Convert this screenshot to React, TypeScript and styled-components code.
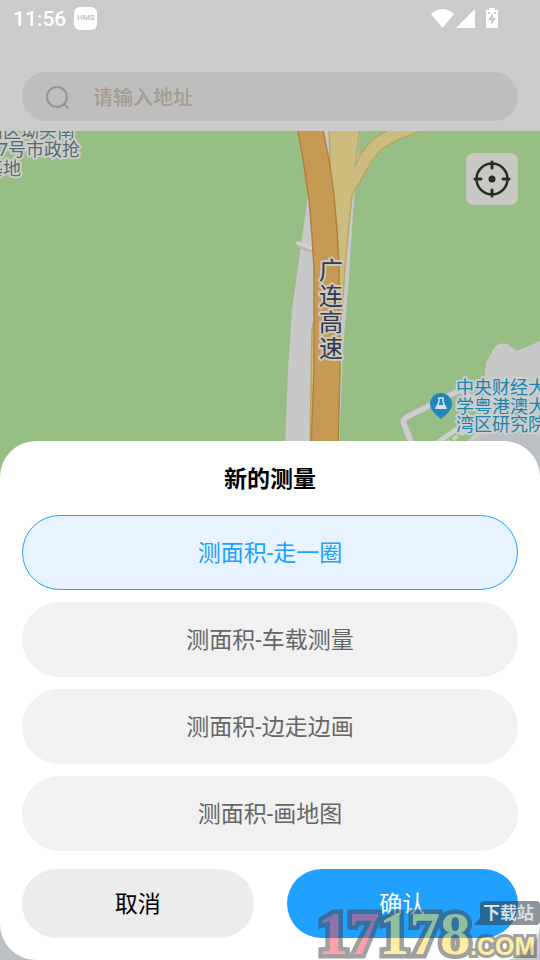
import React, { useState } from "react";
import styled, { createGlobalStyle } from "styled-components";

const sans = `"Roboto", "Noto Sans CJK SC", sans-serif`;

const GlobalStyle = createGlobalStyle`
  * { box-sizing: border-box; }
  body { margin: 0; background: #cbcbcb; font-family: ${sans}; }
  button, input { font-family: inherit; }
`;

const Page = styled.div`
  position: relative;
  display: flex;
  flex-direction: column;
  min-height: 100vh;
  overflow: hidden;
`;

const StatusBar = styled.header`
  display: flex;
  align-items: center;
  justify-content: space-between;
  height: 36px;
  padding: 0 40px 0 13px;
  color: #fff;
`;

const StatusGroup = styled.div`
  display: flex;
  align-items: center;
  gap: 8px;
`;

const Clock = styled.time`
  padding-top: 2px;
  font-size: 21px;
  line-height: 24px;
  font-weight: 500;
`;

const AppBadge = styled.span`
  display: grid;
  place-items: center;
  width: 23px;
  height: 23px;
  border-radius: 6px;
  background: #fff;
  color: #aaa;
  font-size: 8px;
  line-height: 8px;
`;

const SearchArea = styled.div`
  padding: 36px 22px 10px;
`;

const SearchBar = styled.label`
  display: flex;
  align-items: center;
  gap: 22px;
  height: 49px;
  padding: 0 23px;
  border-radius: 25px;
  background: #bebebe;
`;

const SearchInput = styled.input`
  flex: 1;
  min-width: 0;
  padding: 2px 0 0;
  border: 0;
  outline: 0;
  background: transparent;
  font-size: 20px;
  line-height: 28px;
  font-weight: 500;
  color: #555;
  &::placeholder { color: #a59d90; opacity: 1; }
`;

const MapArea = styled.main`
  position: relative;
  display: flex;
  flex: 1;
  background: #97be84;
`;

const MapDrawing = styled.svg`
  position: absolute;
  inset: 0;
  width: 100%;
  height: 100%;
`;

const LocateButton = styled.button`
  position: absolute;
  top: 22px;
  right: 22px;
  display: grid;
  place-items: center;
  width: 52px;
  height: 52px;
  padding: 0;
  border: 0;
  border-radius: 8px;
  background: #c7c9c5;
`;

const Sheet = styled.section`
  position: absolute;
  left: 0;
  right: 0;
  bottom: 0;
  display: flex;
  flex-direction: column;
  gap: 18px;
  padding: 20px 22px 22px;
  border-radius: 36px;
  background: #fff;
`;

const SheetTitle = styled.h2`
  margin: 0;
  padding-top: 2px;
  font-size: 23px;
  line-height: 34px;
  font-weight: 700;
  text-align: center;
  color: #000;
`;

const Options = styled.div`
  display: flex;
  flex-direction: column;
  gap: 12px;
`;

const Option = styled.button<{ $selected: boolean }>`
  height: 75px;
  padding: 2px 0 0;
  border: 1px solid ${(p) => (p.$selected ? "#20a0ff" : "#f1f1f1")};
  border-radius: 38px;
  background: ${(p) => (p.$selected ? "#e7f3fe" : "#f1f1f1")};
  color: ${(p) => (p.$selected ? "#20a0ff" : "#666")};
  font-size: 23px;
  line-height: 36px;
`;

const Actions = styled.div`
  display: grid;
  grid-template-columns: 1fr 1fr;
  gap: 33px;
`;

const ActionButton = styled.button<{ $primary?: boolean }>`
  height: 69px;
  padding: 2px 0 0;
  border: 0;
  border-radius: 35px;
  background: ${(p) => (p.$primary ? "#20a0ff" : "#ececec")};
  color: ${(p) => (p.$primary ? "#fff" : "#000")};
  font-size: 23px;
  line-height: 36px;
`;

const Watermark = styled.svg`
  position: absolute;
  right: 0;
  bottom: 0;
  width: 226px;
  height: 62px;
  pointer-events: none;
`;

const modes = ["测面积-走一圈", "测面积-车载测量", "测面积-边走边画", "测面积-画地图"];

function StatusIcons() {
  return (
    <svg width="70" height="24" viewBox="430 5 70 24" fill="#fff" aria-hidden="true">
      <path d="M431 13Q442.500 3 454 13L442.500 27Z" />
      <path d="M475 8V27H456Z" />
      <path fillRule="evenodd" d="M489 7h6v2h2q1 0 1 1v16q0 1-1 1h-10q-1 0-1-1V10q0-1 1-1h2ZM493 12l-5 7h3v5l5-7h-3ZM488 11v2h2v-2ZM494 11v2h2v-2Z" />
    </svg>
  );
}

function MapCanvas() {
  const halo = { paintOrder: "stroke" as const, strokeLinejoin: "round" as const };
  return (
    <MapDrawing viewBox="0 131 540 829" preserveAspectRatio="xMidYMin slice" aria-label="地图">
      <path fill="#c8c8c8" d="M322 125H361L357 165L354 200L348 290L343 350L339 450H285L288 370L292 310L308 195Z" />
      <path fill="#c8c8c8" d="M460 450L486 420L484 382L486 363L494 348Q498 342 507 344L517 351L540 341V960H0V925L12 945L460 960Z" />
      <path fill="#bcbfc5" d="M470 445L490 433L530 430L540 437V920L500 960H460ZM0 930L20 950L30 960H0Z" />
      <path fill="#ccbd7f" stroke="#b9a765" strokeWidth="1.500" strokeLinejoin="round" d="M329 125H360L358 145L355 166L362 152L373 139L390 129L405 125H440L421 131L397 140L382 149L372 160L362 178L352 195L348 235L345 268L342 310L340 330L336 450H310L312 330L333 240L330 160Z" />
      <path d="M299 245L316 251" stroke="#b5b5b5" strokeWidth="6" strokeLinecap="round" />
      <path d="M298 243L316 250" stroke="#d0d0d0" strokeWidth="4" strokeLinecap="round" />
      <path fill="#c69a55" stroke="#b1823c" strokeWidth="1.500" d="M297 125L304 165L309 200L312 235L314 270V370L311 450H338L340 370L339 265L337 230L334 195L329 160L322 125Z" />
      <path fill="none" stroke="#cd9650" d="M309 125L320 190L324 260V450" />
      <path fill="none" stroke="#b7b7b7" strokeWidth="7" strokeLinejoin="round" d="M414 450L404 424Q402 420 407 417L460 390L475 400" />
      <path fill="none" stroke="#cecece" strokeWidth="5" strokeLinejoin="round" d="M414 450L404 424Q402 420 407 417L460 390L475 400M434 445L470 420" />
      <path fill="none" stroke="#cecece" strokeWidth="4" strokeDasharray="6 3" d="M445 444L473 427" />
      <path fill="none" stroke="#b3b3b3" d="M470 443L492 430" />
      <g fontFamily={sans} fontSize="18" fill="#526b78" stroke="#cfcfca" strokeWidth="4" {...halo}>
        <text x="75" y="138" textAnchor="end">州区坳头南</text>
        <text x="80" y="156" textAnchor="end">7号市政抢</text>
        <text x="21" y="175" textAnchor="end">基地</text>
      </g>
      <g fontFamily={sans} fontSize="24" fill="#303a50" stroke="#cec7bd" strokeWidth="4" textAnchor="middle" {...halo}>
        <text x="331" y="279">广</text>
        <text x="331" y="305">连</text>
        <text x="331" y="331">高</text>
        <text x="331" y="357">速</text>
      </g>
      <g fontFamily={sans} fontSize="18" fill="#1c83ae" stroke="#cbcfcd" strokeWidth="4" {...halo}>
        <text x="456" y="394">中央财经大</text>
        <text x="456" y="413">学粤港澳大</text>
        <text x="456" y="431">湾区研究院</text>
      </g>
      <path fill="#2385bd" d="M430 404a11 11 0 1 1 22 0q0 7-11 15q-11-8-11-15Z" />
      <path fill="none" stroke="#d4e3e8" strokeWidth="1.500" d="M438 398h6M439 398v4l-3 6h10l-3-6v-4" />
      <path fill="#d4e3e8" d="M438 405h6l2 4h-10Z" />
    </MapDrawing>
  );
}

export default function App() {
  const [selected, setSelected] = useState(0);
  return (
    <>
      <GlobalStyle />
      <Page>
        <StatusBar>
          <StatusGroup>
            <Clock>11:56</Clock>
            <AppBadge>HMS</AppBadge>
          </StatusGroup>
          <StatusIcons />
        </StatusBar>
        <SearchArea>
          <SearchBar>
            <svg width="26" height="26" viewBox="0 0 26 26" fill="none" stroke="#959595" strokeWidth="2" strokeLinecap="round" aria-hidden="true">
              <circle cx="12" cy="13" r="10" />
              <path d="M19 20l4 4" />
            </svg>
            <SearchInput aria-label="请输入地址" placeholder="请输入地址" />
          </SearchBar>
        </SearchArea>
        <MapArea>
          <MapCanvas />
          <LocateButton aria-label="定位">
            <svg width="38" height="38" viewBox="0 0 38 38" fill="none" stroke="#282a29" strokeWidth="3" strokeLinecap="round" aria-hidden="true">
              <circle cx="19" cy="19" r="15.500" strokeWidth="2.500" />
              <path d="M19 2v6M19 30v6M2 19h6M30 19h6" />
              <circle cx="19" cy="19" r="3.500" fill="#282a29" stroke="none" />
            </svg>
          </LocateButton>
        </MapArea>
        <Sheet role="dialog" aria-labelledby="sheet-title">
          <SheetTitle id="sheet-title">新的测量</SheetTitle>
          <Options>
            {modes.map((mode, i) => (
              <Option key={mode} $selected={i === selected} aria-pressed={i === selected} onClick={() => setSelected(i)}>
                {mode}
              </Option>
            ))}
          </Options>
          <Actions>
            <ActionButton>取消</ActionButton>
            <ActionButton $primary>确认</ActionButton>
          </Actions>
        </Sheet>
        <Watermark viewBox="0 0 226 62" aria-label="17178下载站.com">
          <defs>
            <linearGradient id="digits" gradientUnits="userSpaceOnUse" x1="0" y1="0" x2="226" y2="0">
              <stop offset="0.280" stopColor="#fb4656" />
              <stop offset="0.280" stopColor="#ffdc46" />
            </linearGradient>
          </defs>
          <g opacity="0.500" fontWeight="700" strokeLinejoin="miter" paintOrder="stroke" stroke="#444">
            <text x="4" y="56" fontSize="61" fill="url(#digits)" strokeWidth="9" fontFamily="Liberation Serif, serif">17178</text>
            <text x="156" y="57" fontSize="25" fill="#ffdc46" strokeWidth="6" fontFamily="Liberation Sans, sans-serif">.COM</text>
          </g>
          <path d="M168 3H222q4 0 4 4v16q0 4-4 4H160l6-7V7q0-4 4-4Z" fill="#303a44" opacity="0.550" />
          <text x="169" y="21" fontSize="17" fontWeight="700" fill="#d5e0e8" fontFamily="Noto Sans CJK SC, sans-serif">下载站</text>
        </Watermark>
      </Page>
    </>
  );
}
